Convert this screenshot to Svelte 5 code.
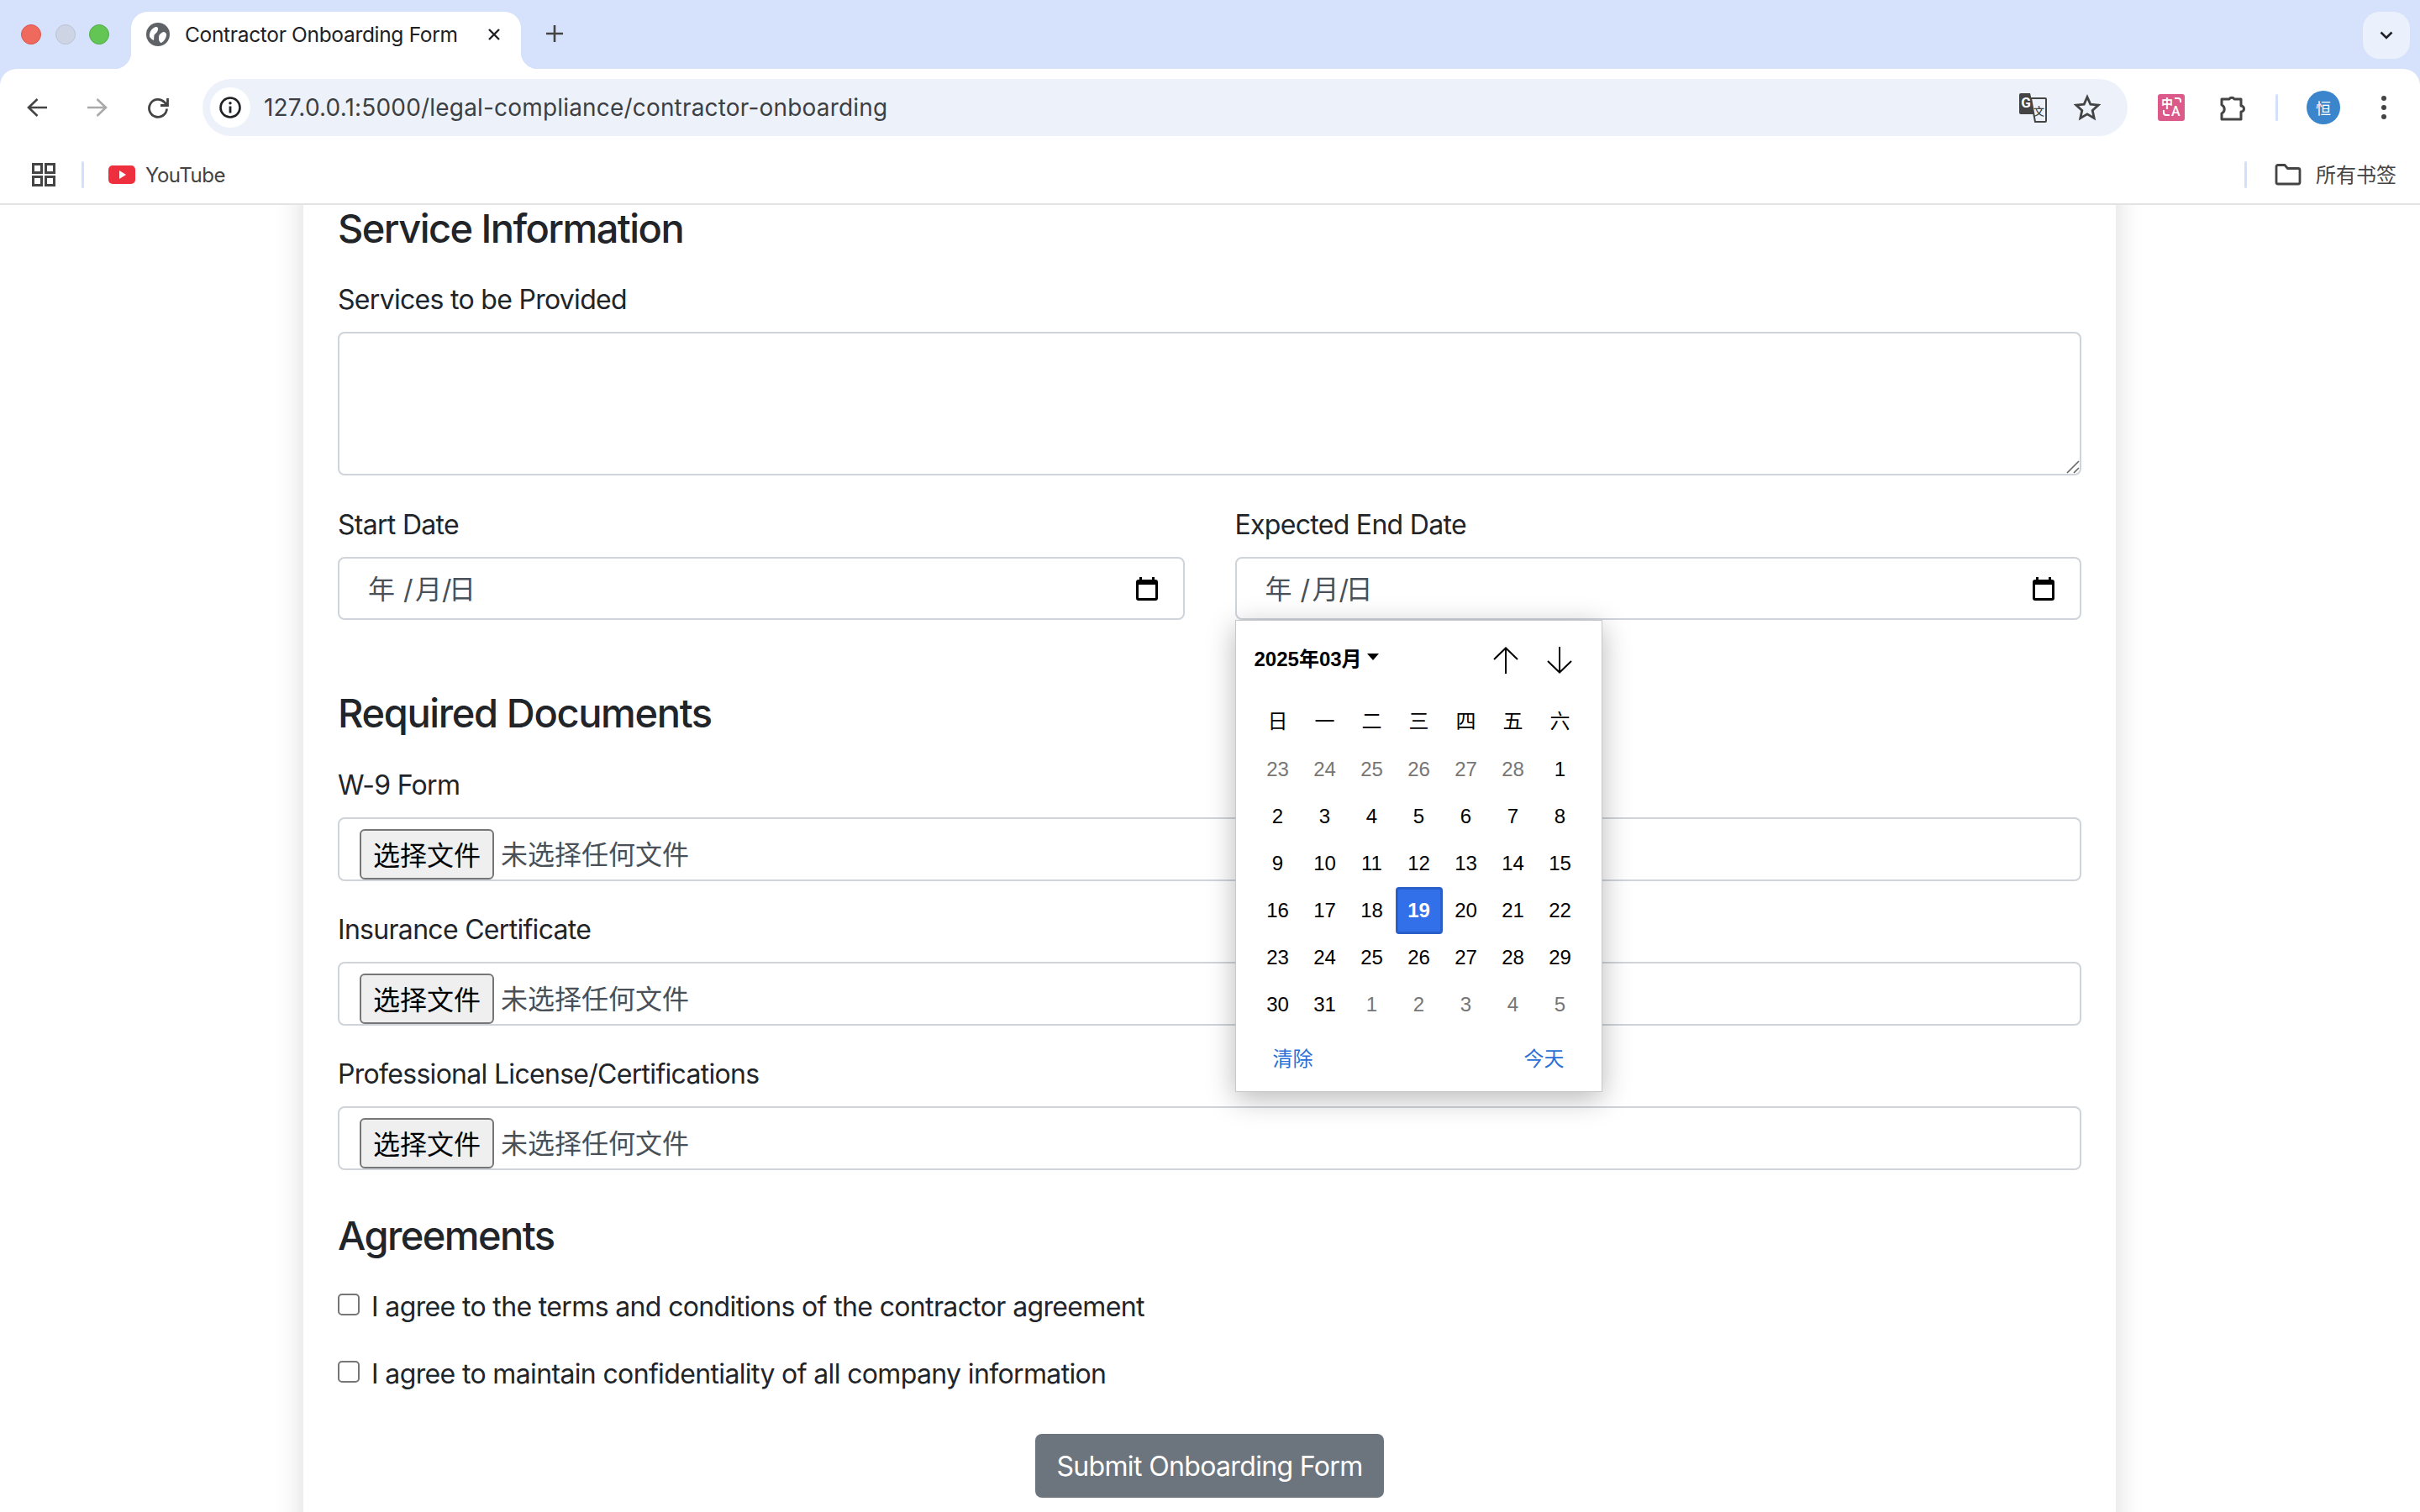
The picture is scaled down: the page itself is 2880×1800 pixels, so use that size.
<script>
  const weekdays = ['日', '一', '二', '三', '四', '五', '六'];
  const prev = [23, 24, 25, 26, 27, 28];
  const days = [...prev.map((d) => ({ d, muted: true })),
    ...Array.from({ length: 31 }, (_, i) => ({ d: i + 1, muted: false, sel: i + 1 === 19 })),
    ...[1, 2, 3, 4, 5].map((d) => ({ d, muted: true }))];
  const docs = ['W-9 Form', 'Insurance Certificate', 'Professional License/Certifications'];
  const agreements = [
    'I agree to the terms and conditions of the contractor agreement',
    'I agree to maintain confidentiality of all company information'
  ];
</script>

{#snippet calIcon()}
  <svg class="cal" viewBox="0 0 26 28" width="26" height="28">
    <path d="M4 0h3v3h12V0h3v3h1a3 3 0 0 1 3 3v19a3 3 0 0 1-3 3H3a3 3 0 0 1-3-3V6a3 3 0 0 1 3-3h1zM3 9v16h20V9z" fill="#000" fill-rule="evenodd"/>
  </svg>
{/snippet}

{#snippet dateText()}
  <span class="dtext"><span>年</span><span class="sl sl1">/</span><span>月</span><span class="sl sl2">/</span><span>日</span></span>
{/snippet}

<div class="page">
  <header class="chrome">
    <div class="tabstrip">
      <div class="lights"><i class="red"></i><i class="grey"></i><i class="green"></i></div>
      <div class="tab">
        <svg class="fav" viewBox="0 0 28 28" width="28" height="28">
          <circle cx="14" cy="14" r="14" fill="#5f6368"/>
          <path d="M4 16.500C3.500 12 6 7 11 5c2.500-.5 3.500 1.500 3 3.500s-2 4-4 5.500c-1 1-.5 4-1 7-2-1-4-2.500-5-4.500zM16 14c1.500-1.500 3.500-3 5-3 2 .5 3.500 2 3 4-.3 3-2.500 7-6 9-1.500 0-3-2.500-3-4.500 0-2 0-4 1-5.500z" fill="#fff"/>
        </svg>
        <span class="tabtitle">Contractor Onboarding Form</span>
        <svg class="tabx" viewBox="0 0 16 16" width="16" height="16"><path d="M2 2l12 12M14 2L2 14" stroke="#202124" stroke-width="2.400" fill="none"/></svg>
      </div>
      <svg class="plus" viewBox="0 0 20 20" width="20" height="20"><path d="M10 0v20M0 10h20" stroke="#444" stroke-width="2.600" fill="none"/></svg>
      <div class="tabmenu">
        <svg viewBox="0 0 16 10" width="16" height="10"><path d="M1.500 1.500L8 8l6.500-6.500" stroke="#202124" stroke-width="2.600" fill="none"/></svg>
      </div>
    </div>
    <div class="toolbar">
      <div class="nav">
        <svg viewBox="0 0 26 26" width="26" height="26"><path d="M25 13H4M13.500 3L3 13l10.500 10" stroke="#444" stroke-width="2.600" fill="none"/></svg>
        <svg viewBox="0 0 26 26" width="26" height="26"><path d="M1 13h21M12.500 3L23 13 12.500 23" stroke="#aaa" stroke-width="2.600" fill="none"/></svg>
        <svg viewBox="0 0 26 26" width="26" height="26"><path d="M23.500 14.500a10.500 10.500 0 1 1-3-8L24 10M24.500 2v8.500H16" stroke="#444" stroke-width="2.800" fill="none"/></svg>
      </div>
      <div class="omnibox">
        <span class="info">
          <svg viewBox="0 0 28 28" width="28" height="28"><circle cx="14" cy="14" r="11.500" stroke="#202124" stroke-width="2.600" fill="none"/><path d="M14 12.500v8" stroke="#202124" stroke-width="2.800"/><circle cx="14" cy="8.800" r="1.700" fill="#202124"/></svg>
        </span>
        <span class="url">127.0.0.1:5000/legal-compliance/contractor-onboarding</span>
        <svg class="gt" viewBox="0 0 34 36" width="34" height="36">
          <path d="M3 1h11l6 25H3a2 2 0 0 1-2-2V3a2 2 0 0 1 2-2z" fill="#444"/>
          <path d="M15 7h17a1 1 0 0 1 1 1v26a1 1 0 0 1-1 1H20z" fill="#edf2fa" stroke="#444" stroke-width="2"/>
          <text x="9" y="18" text-anchor="middle" class="gt-g">G</text>
          <text x="24.500" y="27" text-anchor="middle" class="gt-w">文</text>
        </svg>
        <svg class="star" viewBox="0 0 32 32" width="32" height="32"><path d="M16 3.500l3.800 8.600 9.400 1-7 6.300 2 9.200L16 23.800l-8.200 4.800 2-9.200-7-6.300 9.400-1z" stroke="#444" stroke-width="2.800" fill="none" stroke-linejoin="miter"/></svg>
      </div>
      <div class="exts">
        <span class="pink">
          <svg viewBox="0 0 32 32" width="32" height="32">
            <path d="M20 5h4a3 3 0 0 1 3 3v2M7 19v3a3 3 0 0 0 3 3h4" stroke="#fff" stroke-width="2" fill="none"/>
          </svg>
          <span class="pz">中</span><span class="pa">A</span>
        </span>
        <svg class="puzzle" viewBox="0 0 34 34" width="34" height="34"><path d="M3 7h9a3.500 3.500 0 0 1 6 0h8v8a3.500 3.500 0 0 1 0 7v9H3v-7a5.500 5.500 0 0 0 0-10z" stroke="#444" stroke-width="3" fill="none" stroke-linejoin="round"/></svg>
        <i class="vsep"></i>
        <span class="avatar">恒</span>
        <span class="dots"><i></i><i></i><i></i></span>
      </div>
    </div>
    <div class="bookmarks">
      <svg class="apps" viewBox="0 0 28 28" width="28" height="28"><g fill="none" stroke="#444" stroke-width="3"><rect x="1.500" y="1.500" width="10" height="10"/><rect x="16.500" y="1.500" width="10" height="10"/><rect x="1.500" y="16.500" width="10" height="10"/><rect x="16.500" y="16.500" width="10" height="10"/></g></svg>
      <i class="vsep"></i>
      <svg class="yt" viewBox="0 0 32 22" width="32" height="22"><rect width="32" height="22" rx="5" fill="#ee2f3e"/><path d="M13 6l8 5-8 5z" fill="#fff"/></svg>
      <span class="bmtext">YouTube</span>
      <span class="spacer"></span>
      <i class="vsep"></i>
      <svg class="folder" viewBox="0 0 32 26" width="32" height="26"><path d="M2 3.500a2 2 0 0 1 2-2h8l3.500 4H28a2 2 0 0 1 2 2V22a2 2 0 0 1-2 2H4a2 2 0 0 1-2-2z" stroke="#444" stroke-width="2.800" fill="none"/></svg>
      <span class="bmtext cjk">所有书签</span>
    </div>
  </header>

  <main class="content">
    <form class="card">
      <h4 class="first">Service Information</h4>
      <label class="lbl" for="services">Services to be Provided</label>
      <div class="tawrap">
        <textarea id="services" class="ta"></textarea>
        <svg class="grip" viewBox="0 0 16 16" width="16" height="16"><path d="M1 15L15 1M9 15l6-6" stroke="#666" stroke-width="1.600"/></svg>
      </div>

      <div class="dates">
        <div class="datefield">
          <div class="lbl">Start Date</div>
          <div class="control date">{@render dateText()}{@render calIcon()}</div>
        </div>
        <div class="datefield">
          <div class="lbl">Expected End Date</div>
          <div class="control date anchor">
            {@render dateText()}{@render calIcon()}
            <div class="popup">
              <div class="pophead">
                <span class="month">2025年03月</span>
                <i class="caret"></i>
                <span class="spacer"></span>
                <svg class="arr" viewBox="0 0 30 32" width="30" height="32"><path d="M15 32V2M1 15L15 1.500 29 15" stroke="#000" stroke-width="2" fill="none"/></svg>
                <svg class="arr" viewBox="0 0 30 32" width="30" height="32"><path d="M15 0v30M1 17l14 13.500L29 17" stroke="#000" stroke-width="2" fill="none"/></svg>
              </div>
              <div class="grid">
                {#each weekdays as w}<span class="cell wd">{w}</span>{/each}
                {#each days as c}<span class="cell" class:muted={c.muted} class:sel={c.sel}>{c.d}</span>{/each}
              </div>
              <div class="popfoot"><span>清除</span><span>今天</span></div>
            </div>
          </div>
        </div>
      </div>

      <h4 class="docs">Required Documents</h4>
      {#each docs as d}
        <div class="lbl">{d}</div>
        <div class="control file">
          <span class="fbtn">选择文件</span><span class="ftext">未选择任何文件</span>
        </div>
      {/each}

      <h4 class="agr">Agreements</h4>
      {#each agreements as a}
        <div class="check">
          <span class="box"></span><span class="cktext">{a}</span>
        </div>
      {/each}
      <div class="submitrow"><span class="submit">Submit Onboarding Form</span></div>
    </form>
  </main>
</div>

<style>
  :global(body) { margin: 0; background: #fff; }
  .page {
    width: 2880px; height: 1800px; overflow: hidden; display: flex; flex-direction: column;
    font-family: Inter, "Noto Sans CJK SC", sans-serif; color: #212529;
  }
  .chrome { flex: none; background: #d6e2fb; position: relative; z-index: 2; }
  i { display: block; }
  svg { display: block; flex: none; }
  .spacer { flex: 1; }

  .tabstrip { height: 82px; display: flex; align-items: flex-start; }
  .lights { display: flex; gap: 16.500px; padding: 29px 0 0 25px; width: 131px; box-sizing: border-box; flex: none; }
  .lights i { width: 24px; height: 24px; border-radius: 50%; box-sizing: border-box; }
  .red { background: #f0695d; border: 1px solid #d9574c; }
  .grey { background: #cdd4e3; border: 1px solid #bcc3d2; }
  .green { background: #62c554; border: 1px solid #52ad47; }
  .tab {
    margin: 14px 0 0 25px; width: 464px; height: 68px; box-sizing: border-box; background: #fff;
    border-radius: 20px 20px 0 0; display: flex; align-items: center; padding: 0 24px 14px 18px; position: relative;
  }
  .tab::before, .tab::after {
    content: ''; position: absolute; bottom: 0; width: 20px; height: 20px;
  }
  .tab::before { left: -20px; background: radial-gradient(circle at 0 0, #d6e2fb 20px, #fff 20.5px); }
  .tab::after { right: -20px; background: radial-gradient(circle at 100% 0, #d6e2fb 20px, #fff 20.5px); }
  .tabtitle { margin-left: 18px; font-size: 24.500px; color: #202124; white-space: nowrap; flex: 1; letter-spacing: -0.32px; }
  .plus { margin: 30px 0 0 30px; }
  .tabmenu {
    margin: 14px 12px 0 auto; width: 56px; height: 56px; border-radius: 20px; background: #eaf1fc;
    display: flex; align-items: center; justify-content: center;
  }

  .toolbar { height: 80px; background: #fff; border-radius: 20px 20px 0 0; display: flex; align-items: flex-start; }
  .nav { display: flex; gap: 46px; padding: 33px 0 0 31px; width: 241px; box-sizing: border-box; flex: none; }
  .omnibox {
    margin-top: 12px; width: 2291px; height: 68px; border-radius: 34px; background: #edf2fa;
    display: flex; align-items: center; box-sizing: border-box; padding: 0 32px 0 9px; flex: none;
  }
  .info { width: 48px; height: 48px; border-radius: 24px; background: #fff; display: flex; align-items: center; justify-content: center; flex: none; }
  .url { margin-left: 16px; font-size: 28px; color: #3c3f43; flex: 1; white-space: nowrap; letter-spacing: 0.18px; }
  .gt { margin-right: 32px; }
  .gt-g { font: 700 17px Roboto, sans-serif; fill: #fff; }
  .gt-w { font: 500 13px "Noto Sans CJK SC", sans-serif; fill: #444; }
  .exts { flex: 1; display: flex; align-items: center; height: 68px; margin-top: 12px; padding-left: 36px; }
  .pink {
    width: 32px; height: 32px; flex: none; position: relative; background: #dc5a8a; border-radius: 3px;
    color: #fff; font-family: "Noto Sans CJK SC", sans-serif; font-weight: 700;
  }
  .pz { position: absolute; left: 4px; top: 3px; font-size: 14px; line-height: 14px; }
  .pa { position: absolute; left: 16px; top: 14px; font-size: 16px; line-height: 14px; font-family: Roboto, sans-serif; font-weight: 500; }
  .puzzle { margin-left: 41px; }
  .exts .vsep { margin-left: 33px; }
  .avatar {
    margin-left: 34px; width: 40px; height: 40px; border-radius: 50%; background: #3a85cc; color: #fff;
    font-size: 18px; display: flex; align-items: center; justify-content: center; flex: none;
  }
  .dots { margin-left: 49px; display: flex; flex-direction: column; gap: 5px; }
  .dots i { width: 6px; height: 6px; border-radius: 50%; background: #444; }
  .vsep { width: 3px; height: 32px; background: #d3e0fb; border-radius: 2px; flex: none; }

  .bookmarks {
    height: 82px; box-sizing: border-box; background: #fff; border-bottom: 2px solid #e3e3e3;
    display: flex; align-items: center; padding: 12px 28px 0 38px; font-size: 24px; color: #444;
  }
  .apps { margin-right: 31px; }
  .yt { margin: 0 12px 0 29px; }
  .folder { margin: 0 17px 0 33px; }
  .bmtext { white-space: nowrap; letter-spacing: -0.5px; }
  .cjk { letter-spacing: 0; margin-bottom: 3px; }

  .content { flex: 1; min-height: 0; overflow: hidden; background: #fff; }
  .card {
    width: 2157px; margin: -60px auto 0 361px; padding: 60px 41px 100px; box-sizing: border-box; background: #fff;
    box-shadow: 0 16px 32px rgba(0, 0, 0, .15); min-height: 1760px;
  }
  h4 { margin: 0; font-size: 47px; line-height: 58px; font-weight: 500; letter-spacing: -1.56px; }
  .first { margin-bottom: 31px; line-height: 56px; }
  .docs { margin-top: 82px; margin-bottom: 31px; letter-spacing: -1.36px; }
  .agr { margin-top: 49px; margin-bottom: 33px; }
  .lbl { display: block; font-size: 32px; line-height: 51px; margin-bottom: 13px; letter-spacing: -0.7px; }
  .tawrap { position: relative; height: 171px; margin-bottom: 34px; }
  .ta {
    display: block; width: 100%; height: 100%; box-sizing: border-box; border: 2px solid #ced4da; border-radius: 8px;
    resize: none; outline: none; background: #fff; margin: 0; padding: 0;
  }
  .grip { position: absolute; right: 2px; bottom: 2px; }
  .dates { display: grid; grid-template-columns: 1fr 1fr; gap: 60px; }
  .datefield .lbl { line-height: 49px; margin-bottom: 14px; }
  .control {
    height: 76px; box-sizing: border-box; border: 2px solid #ced4da; border-radius: 8px; background: #fff;
    font-size: 32px; color: #495057;
  }
  .date { height: 75px; display: flex; align-items: center; justify-content: space-between; padding: 0 30px 0 34px; }
  .dtext { display: flex; align-items: baseline; margin-bottom: 3px; }
  .sl { display: block; width: 9px; text-align: center; }
  .sl1 { margin: 0 5px 0 10px; }
  .sl2 { margin: 0 -1px 0 0; }
  .anchor { position: relative; }
  .popup {
    position: absolute; left: -2px; top: 73px; width: 437px; height: 562px; box-sizing: border-box; z-index: 5;
    background: #fff; border: 1px solid #c8c8c8; box-shadow: 0 8px 32px rgba(0, 0, 0, .28); padding: 0 22px;
    font-family: "Liberation Sans", "Noto Sans CJK SC", sans-serif; color: #000; font-size: 24px;
  }
  .pophead { display: flex; align-items: center; height: 92px; }
  .month { font-weight: 700; white-space: nowrap; margin-bottom: 6px; }
  .caret { margin: 0 0 6px 6px; width: 0; height: 0; border: 7px solid transparent; border-top: 8px solid #000; border-bottom: 0; }
  .arr { margin: 2px 13px 0 21px; }
  .grid { display: grid; grid-template-columns: repeat(7, 56px); grid-auto-rows: 56px; margin-top: 1px; }
  .cell { display: flex; align-items: center; justify-content: center; box-sizing: border-box; }
  .wd { padding-bottom: 8px; }
  .muted { color: #767676; }
  .sel { background: #3170e8; border: 3px solid #2a5fc9; border-radius: 4px; color: #fff; font-weight: 700; }
  .popfoot { display: flex; justify-content: space-between; padding: 0 22px 0 22px; margin-top: 17px; color: #2a70d6; }
  .file { display: flex; align-items: flex-start; margin-bottom: 32px; position: relative; padding-left: 24px; overflow: visible; }
  .fbtn {
    margin-top: 12px; width: 160px; height: 60px; box-sizing: border-box; border: 2px solid #767676; border-radius: 6px; background: #efefef;
    color: #000; display: flex; align-items: center; justify-content: center; flex: none; padding-bottom: 3px;
  }
  .ftext { margin: 12px 0 0 8px; line-height: 62px; }
  .check { display: flex; align-items: center; height: 48px; font-size: 32px; margin-bottom: 32px; letter-spacing: -0.64px; }
  .cktext { margin-bottom: 4px; }
  .box { width: 26px; height: 26px; box-sizing: border-box; border: 2px solid #767676; border-radius: 5px; margin: -8px 14px 0 0; background: #fff; flex: none; }
  .submitrow { display: flex; justify-content: center; margin-top: 46px; }
  .submit {
    height: 76px; padding: 0 25px; border-radius: 8px; background: #6c757d; color: #fff; font-size: 32px; letter-spacing: -0.65px;
    display: flex; align-items: center; white-space: nowrap;
  }
</style>
